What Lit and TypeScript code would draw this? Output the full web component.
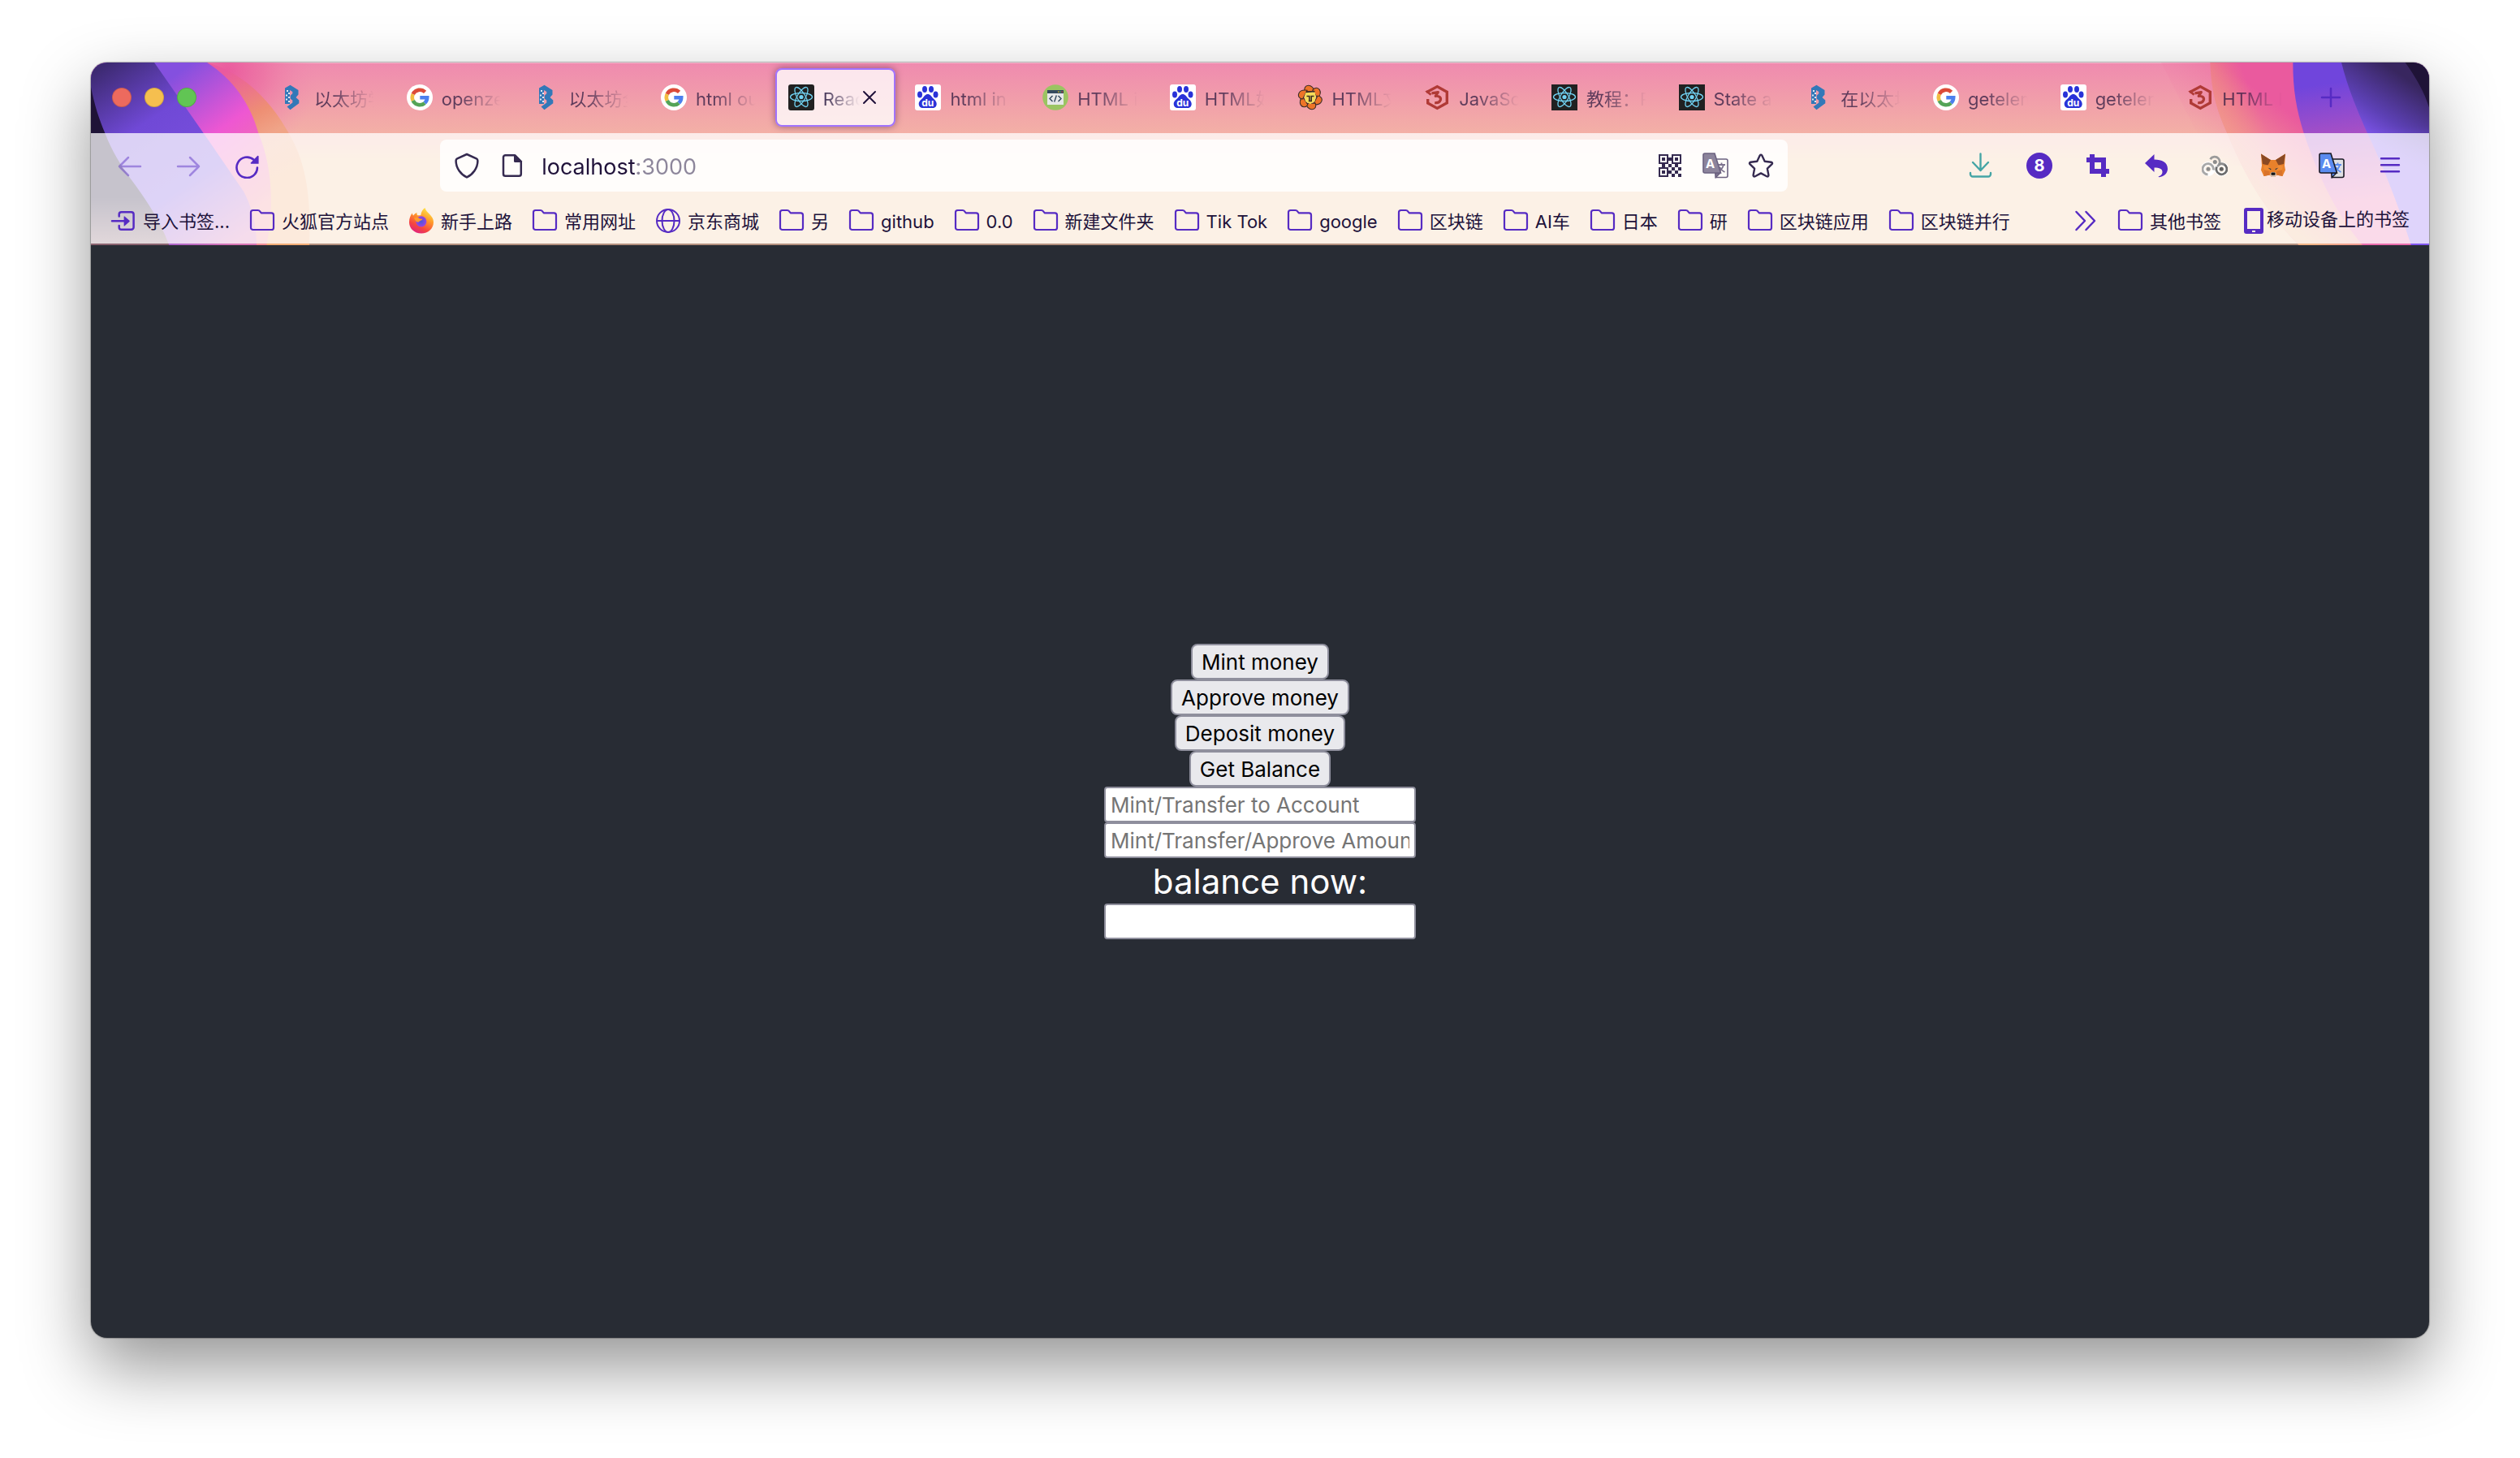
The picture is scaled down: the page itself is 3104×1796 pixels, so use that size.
import { LitElement, html, svg, css, TemplateResult } from "lit";
import { customElement, state } from "lit/decorators.js";
import { classMap } from "lit/directives/class-map.js";

const icon = (body: TemplateResult, cls = "") =>
  html`<svg class="icon ${cls}" viewBox="0 0 32 32" aria-hidden="true">${body}</svg>`;

/* ---------- toolbar icons ---------- */
const line = (d: string, w = 2.5) => svg`<path d=${d} fill="none" stroke="currentColor" stroke-width=${w} stroke-linecap="round" stroke-linejoin="round"/>`;

const backIcon = icon(line("M29 17H3M14 6 3 17l11 11"));
const forwardIcon = icon(line("M3 17h26M18 6l11 11-11 11"));
const reloadIcon = icon(svg`${line("M24.6 8.8A12.7 12.7 0 1 0 28.9 18.6", 2.6)}<path d="M30.6 4.6v9.2H21.4a.8.8 0 0 1-.6-1.3l8-8.2a1 1 0 0 1 1.8.3z" fill="currentColor"/>`);
const shieldIcon = icon(line("M16 2 4.2 7.4Q2.6 8.2 2.6 10C2.6 19 8.5 26.8 16 30.4 23.5 26.8 29.4 19 29.4 10q0-1.8-1.6-2.6z"));
const pageIcon = icon(svg`${line("M7.6 3.2h11.2l8 8v15a2.6 2.6 0 0 1-2.6 2.6H7.6A2.6 2.6 0 0 1 5 26.2V5.8A2.6 2.6 0 0 1 7.6 3.2z")}<path d="M18 2.5h2.2L28 10.6V12h-8.5a1.5 1.5 0 0 1-1.5-1.5z" fill="currentColor"/>`);
const starIcon = icon(line("M16 2.6c.6 0 1 .4 1.3.9l3.4 7.2 7.9 1c1.4.2 1.9 1.5 1 2.5l-5.7 5.5 1.5 7.9c.2 1.500-1 2.200-2.200 1.600L16 25.400l-7.200 3.800c-1.200.6-2.400-.1-2.200-1.600l1.500-7.900-5.700-5.500c-.9-1-.4-2.300 1-2.500l7.900-1 3.400-7.200c.3-.5.7-.9 1.300-.9z", 2.4));
const downloadIcon = icon(line("M15.5 1.5V22M6 12l9.500 10L25 12M3 25v1.500A3 3 0 0 0 6 29.500h19a3 3 0 0 0 3-3V25", 2.4));
const countIcon = icon(svg`<circle cx="16" cy="16" r="16" fill="currentColor"/><text x="16" y="23.3" text-anchor="middle" font-family="Inter, sans-serif" font-size="20" font-weight="700" fill="#fff">8</text>`);
const cropIcon = icon(svg`<path d="M6 2h6v4h14v14h4v6h-4v4h-6v-4H6V12H2V6h4zM12 12v8h8v-8z" fill="currentColor" fill-rule="evenodd"/>`);
const undoIcon = icon(svg`<path d="M2 13 13.500 2v6.500C23 8.500 30 12 30 20c0 5-4 9.500-10.500 10.200-1 .1-1.200-.5-.3-.9 3-1.300 4.300-3.200 4.300-5.500 0-3.800-3.500-5.300-10-5.300V24z" fill="currentColor"/>`);
const menuIcon = icon(line("M5 7.200h22M5 15.200h22M5 23.200h22", 2.4));
const chevronsIcon = icon(line("M5.500 5 16 16 5.500 27M17.500 5 28 16 17.500 27"));
const plusIcon = icon(line("M16 5v22M5 16h22"));
const closeIcon = icon(line("M9 9l14 14M23 9 9 23", 2));
const chainIcon = icon(svg`
  <g fill="none">
    <g stroke="#fff" stroke-width="5"><circle cx="8" cy="20" r="6.400"/><circle cx="24.300" cy="20.300" r="6.400"/></g>
    <path d="M7.500 27A6.700 6.700 0 1 1 14.300 21.500" stroke="#a8a8a8" stroke-width="2.800"/>
    <path d="M10.600 8.200A6.300 6.300 0 1 1 19 17" stroke="#9a9a9a" stroke-width="2.800"/>
    <path d="M18.500 17.500A6.500 6.500 0 1 0 27.500 14.600" stroke="#6c6c6c" stroke-width="2.800"/>
    <path d="M28 15A6.500 6.500 0 0 0 21 14.800" stroke="#8c8c8c" stroke-width="2.800"/>
  </g>
  <g fill="#8c8c8c"><circle cx="8" cy="20.300" r="2.500"/><circle cx="16.300" cy="11.600" r="2.500"/><circle cx="24.300" cy="20.300" r="2.500" fill="#606060"/></g>`);
const foxIcon = icon(svg`<path d="M1 1.500 13 9h6L31 1.500l-1 14.500 1 5.500-3.500 7.500-7.500-1.500-2 2.500h-4l-2-2.500L4.500 29 1 21.500 2 16z" fill="#e8812b"/><path d="M1 1.500 13 9l-3.500 6.500L3 14zM31 1.500 19 9l3.500 6.500L29 14z" fill="#8a4a24"/><path d="M4 16.500l6-1 3 6.500-8-1zM28 16.500l-6-1-3 6.500 8-1z" fill="#f08c35"/><path d="M9.500 18.500l4 1.500-.5 1.600zM22.500 18.500l-4 1.500.5 1.600z" fill="#2b3340"/><path d="M5 21.500 11 23l1 4.500L4.500 29zM27 21.500 21 23l-1 4.500 7.500 1.500z" fill="#d9732a"/><path d="M12 26.500l2-2.500h4l2 2.500-2 3.500h-4z" fill="#d5c4b6"/><path d="M14 24.500h4l.8 2-1 1.200h-3.600l-1-1.200z" fill="#161616"/>`);

const finder = (x: number, y: number) =>
  svg`<path d="M${x} ${y}h12v12h-12zM${x + 2} ${y + 2}v8h8v-8z" fill-rule="evenodd"/><path d="M${x + 4} ${y + 4}h4v4h-4z"/>`;
const qrBits = [[14, 6], [6, 14], [14, 14], [22, 14], [18, 18], [26, 18], [14, 22], [22, 22], [18, 26], [26, 26]];
const qrIcon = icon(svg`<g fill="currentColor">${finder(2, 2)}${finder(18, 2)}${finder(2, 18)}${qrBits.map(([x, y]) => svg`<path d="M${x} ${y}h4v4h-4z"/>`)}</g>`);

const translateIcon = (front: string, edge: string, page: string, ink: string) => icon(svg`
  <path d="M12 8h17a2 2 0 0 1 2 2v18.500a2 2 0 0 1-2 2H17z" fill=${page} stroke=${edge} stroke-width="1.600"/>
  <path d="M19 15h9M23.500 12.500V15M26 15c-1 4-3.500 7-7 9M21 17.500c1.200 2.800 3.400 5 6.500 6.500" fill="none" stroke=${ink} stroke-width="1.800"/>
  <path d="M16 25v6l6-6z" fill=${ink} stroke=${edge} stroke-width="1.400" stroke-linejoin="round"/>
  <path d="M3 1h12l7.500 24H3a2 2 0 0 1-2-2V3a2 2 0 0 1 2-2z" fill=${front} stroke=${edge} stroke-width="1.600"/>
  <text x="9.500" y="18.500" text-anchor="middle" font-family="Inter, sans-serif" font-size="15" font-weight="700" fill="#fff">A</text>`);
const translateGrey = translateIcon("#8c849c", "#6b6180", "#fffdfa", "#7d748f");
const translateBlue = translateIcon("#5a8bf0", "#1a1a24", "#dfe0e4", "#5a8bf0");

/* ---------- bookmark icons ---------- */
const folderIcon = icon(line("M4.600 3h6c1.400 0 2 .5 2.800 1.600l1.400 1.800h12.600A2.600 2.600 0 0 1 30 9v15.400a2.600 2.600 0 0 1-2.600 2.600H4.600A2.600 2.600 0 0 1 2 24.400V5.600A2.600 2.600 0 0 1 4.600 3z", 2.2));
const importIcon = icon(svg`${line("M10.700 10.500V8a2.800 2.800 0 0 1 2.800-2.800h12.300A2.800 2.800 0 0 1 28.600 8v16a2.800 2.800 0 0 1-2.800 2.800H13.500a2.800 2.800 0 0 1-2.800-2.800v-2M2 16.300h16")}<path d="M16.600 11v11q0 1 .9.300l6-5.400q.6-.6 0-1.200l-6-5.100q-.9-.6-.9.400z" fill="currentColor"/>`);
const globeIcon = icon(svg`<g fill="none" stroke="currentColor" stroke-width="2"><circle cx="16" cy="16" r="14"/><ellipse cx="16" cy="16" rx="7.500" ry="14"/><path d="M2 16h28"/></g>`);
const phoneIcon = icon(svg`<path d="M7 0h18a3 3 0 0 1 3 3v26a3 3 0 0 1-3 3H7a3 3 0 0 1-3-3V3a3 3 0 0 1 3-3zM8 4v22h16V4zM14 28v2h4v-2z" fill="currentColor" fill-rule="evenodd"/>`);
const firefoxIcon = icon(svg`
  <defs>
    <linearGradient id="fl" x1=".8" y1="0" x2=".3" y2="1"><stop offset="0" stop-color="#fff04a"/><stop offset=".4" stop-color="#ff9a2a"/><stop offset=".75" stop-color="#f5453f"/><stop offset="1" stop-color="#e02180"/></linearGradient>
    <radialGradient id="fc"><stop offset="0" stop-color="#4a55d8"/><stop offset="1" stop-color="#9a44e0"/></radialGradient>
  </defs>
  <path d="M20.500 0c.5 3 3 5 5.300 7.500C29 11 31 13.500 31 17.500 31 25.500 24.500 31.500 16 31.500S1 25.500 1 17.500c0-4.500 1.500-8 3.800-11 .2 1.500.6 2.300 1.400 3C7.500 7.600 8.800 6.500 10.500 6c-.3 1.500 0 2.500.8 3.200 1.500.2 3 .3 4-.3C15.800 5 17.800 1.500 20.500 0z" fill="url(#fl)"/>
  <circle cx="15.800" cy="16.800" r="6.600" fill="url(#fc)"/>
  <path d="M7 12.500c2.500-1.300 5.500-.8 7 1l3.500.2c-.5 1.800-3.500 1.600-4.500 3.500-2.500 1-4-.2-6-4.700z" fill="#ff9a2a"/>`);

/* ---------- favicons ---------- */
const favB = icon(svg`
  <path d="M13.500.7 23.500 7v5.500L20.500 16l3.800 3.500v3.800l-10.800 8L9.500 27.600l6.800-5.200v-3l-2.600-1.700v-4l2.600-2.400V9L13 7v17H7V4.600z" fill="#3278b8"/>
  <path d="M9 7h2v2H9zM11 10h2v2h-2zM8 12.500h2v2H8zM11 15h2v2h-2zM8 17.500h2v2H8zM11 20h2v2h-2z" fill="#dfe6f0"/>`);
const favGoogle = icon(svg`
  <circle cx="16" cy="16" r="16" fill="#fff"/>
  <g fill="none" stroke-width="4.600">
    <path d="M7.700 12A9.300 9.300 0 0 1 22.600 9.400" stroke="#dc4b38"/>
    <path d="M7.700 20a9.300 9.300 0 0 1 0-8" stroke="#f2bd42"/>
    <path d="M22.200 22.900A9.300 9.300 0 0 1 7.700 20" stroke="#54a457"/>
    <path d="M16.300 16.300h8.900a9.300 9.300 0 0 1-3 6.600" stroke="#4c80ee"/>
  </g>`);
const favReact = (rx: number) => icon(svg`
  <rect width="32" height="32" rx=${rx} fill="#212121"/>
  <g fill="none" stroke="#71d3f3" stroke-width="1.300"><ellipse cx="16" cy="15.500" rx="13.500" ry="5"/><ellipse cx="16" cy="15.500" rx="13.500" ry="5" transform="rotate(60 16 15.500)"/><ellipse cx="16" cy="15.500" rx="13.500" ry="5" transform="rotate(120 16 15.500)"/></g>
  <circle cx="16" cy="15.500" r="2.600" fill="#71d3f3"/>`);
const favBaidu = icon(svg`
  <rect width="32" height="32" rx="3" fill="#fff"/>
  <g fill="#2932d8"><ellipse cx="6" cy="12.500" rx="3" ry="4"/><ellipse cx="12" cy="6" rx="3" ry="4"/><ellipse cx="20" cy="6" rx="3" ry="4"/><ellipse cx="25.500" cy="12.500" rx="3" ry="4"/>
  <path d="M15.800 12c3 0 4.200 2.500 6.200 4.800 2 2.200 4.700 3.700 4.700 7.200 0 3-2 5-5 5H10c-3 0-5.300-2-5.300-5 0-3.500 3-5 4.900-7.200C11.600 14.500 12.800 12 15.800 12z"/></g>
  <text x="15.800" y="27" text-anchor="middle" font-family="Inter, sans-serif" font-size="12" font-weight="700" fill="#fff">du</text>`);
const favCode = icon(svg`
  <circle cx="16" cy="16" r="15.800" fill="#9bc462"/><rect x="6" y="7" width="20" height="18" fill="#e6e7e8"/><path d="M6 7h20v4H6z" fill="#34495e"/>
  <path d="M19 8.500h1.500v1.300H19z" fill="#f0c419"/><path d="M21.300 8.500h1.500v1.300h-1.500z" fill="#4fba6f"/><path d="M23.500 8.500H25v1.300h-1.500z" fill="#e64c3c"/>
  <path d="M12.500 14 9 17.500l3.500 3.500M19.500 14l3.500 3.500-3.500 3.500M17.300 13.500l-2.600 8" fill="none" stroke="#34495e" stroke-width="1.400"/>`);
const favLion = icon(svg`
  <g fill="#ee7428" stroke="#3a2a26" stroke-width="1.100" stroke-linejoin="round">${[0, 60, 120, 180, 240, 300].map(a => svg`<path d="M9.500 9C7.500 4.500 10 1.500 13.500 1.300 17.500 1.200 20 4.500 21.500 8.500z" transform="rotate(${a} 15.800 16)"/>`)}</g>
  <path d="M10.500 9.500h11L23 15l-1.500 6-5.700 3.200L10 21l-1.500-6z" fill="#f6dc5a"/>
  <path d="M10.500 9.500 21.500 8.500M11.500 14.500h3.300v6M20.500 14.500h-3.300v6M13.800 20.500h4.200" fill="none" stroke="#3a2a26" stroke-width="1.600"/>`);
const favHex = icon(svg`
  <path d="M3 9.800 16.300 2.600 28.300 9.300v13.500L16.300 29.400 4.700 22.900V18" fill="none" stroke="#b03a36" stroke-width="3.400"/>
  <path d="M1.300 8.600 3.500 7.600 9.600 11.500 7.700 13.700z" fill="#b03a36"/>
  <path d="M9.500 10.800 17.300 9.600 14.200 14.300C18.800 13.800 21.300 16.300 20.300 19.200 19.400 21.700 16.800 23 13.200 22.600" fill="none" stroke="#b03a36" stroke-width="3.200" stroke-linejoin="round"/>`);

interface Tab { title: string; fav: TemplateResult; }
const TABS: Tab[] = [
  { title: "以太坊学", fav: favB },
  { title: "openze", fav: favGoogle },
  { title: "以太坊全", fav: favB },
  { title: "html ou", fav: favGoogle },
  { title: "Reac", fav: favReact(3) },
  { title: "html in", fav: favBaidu },
  { title: "HTML i", fav: favCode },
  { title: "HTML如", fav: favBaidu },
  { title: "HTML文", fav: favLion },
  { title: "JavaSc", fav: favHex },
  { title: "教程：R", fav: favReact(0) },
  { title: "State a", fav: favReact(0) },
  { title: "在以太坊", fav: favB },
  { title: "getelem", fav: favGoogle },
  { title: "getelem", fav: favBaidu },
  { title: "HTML I", fav: favHex },
];

interface Bookmark { label: string; glyph?: TemplateResult; }
const BOOKMARKS: Bookmark[] = [
  { label: "导入书签...", glyph: importIcon },
  { label: "火狐官方站点" },
  { label: "新手上路", glyph: firefoxIcon },
  { label: "常用网址" },
  { label: "京东商城", glyph: globeIcon },
  { label: "另" },
  { label: "github" },
  { label: "0.0" },
  { label: "新建文件夹" },
  { label: "Tik Tok" },
  { label: "google" },
  { label: "区块链" },
  { label: "AI车" },
  { label: "日本" },
  { label: "研" },
  { label: "区块链应用" },
  { label: "区块链并行" },
];

/* ---------- theme artwork at the two ends of the chrome ---------- */
const artLeft = html`<svg class="art art-left" viewBox="36 39 870 675" aria-hidden="true">
  <defs>
    <radialGradient id="lg" gradientUnits="userSpaceOnUse" cx="540" cy="70" r="340"><stop offset="0" stop-color="#ea5a9e"/><stop offset=".4" stop-color="#ec6ca2" stop-opacity=".7"/><stop offset="1" stop-color="#ef8bb0" stop-opacity="0"/></radialGradient>
    <linearGradient id="l1" gradientUnits="userSpaceOnUse" x1="520" y1="80" x2="720" y2="480"><stop offset="0" stop-color="#ea5a9e"/><stop offset=".42" stop-color="#ee8f74"/><stop offset=".62" stop-color="#f0a488"/><stop offset="1" stop-color="#f1ab74"/></linearGradient>
    <linearGradient id="l2" gradientUnits="userSpaceOnUse" x1="340" y1="90" x2="680" y2="560"><stop offset="0" stop-color="#8450df"/><stop offset=".45" stop-color="#ee57d2"/><stop offset=".95" stop-color="#f08298"/><stop offset="1" stop-color="#f28c94"/></linearGradient>
    <linearGradient id="l3" gradientUnits="userSpaceOnUse" x1="70" y1="60" x2="520" y2="740"><stop offset="0" stop-color="#3d2a72"/><stop offset=".32" stop-color="#7049d6"/><stop offset=".66" stop-color="#7a50de"/><stop offset="1" stop-color="#d874b4"/></linearGradient>
    <linearGradient id="l4" x1="0" y1="0" x2="0" y2="1"><stop offset="0" stop-color="#1f1337"/><stop offset=".7" stop-color="#1f1337"/><stop offset="1" stop-color="#8c6470"/></linearGradient>
  </defs>
  <rect x="36" y="39" width="870" height="675" fill="url(#lg)"/>
  <path d="M465 39C580 70 690 160 767 300 825 400 850 510 843 714H36V39z" fill="url(#l1)"/>
  <path d="M465 39C560 100 625 190 655 300 705 420 715 570 685 714H36V39z" fill="url(#l2)"/>
  <path d="M270 39 452 300 600 515C630 570 648 640 648 714H36V39z" fill="url(#l3)"/>
  <path d="M36 130C50 200 65 245 88 300 115 370 145 415 180 465 240 545 290 620 325 714H36z" fill="url(#l4)"/>
</svg>`;
const artRight = html`<svg class="art art-right" viewBox="306 39 990 675" aria-hidden="true">
  <defs>
    <linearGradient id="r0" gradientUnits="userSpaceOnUse" x1="420" y1="300" x2="760" y2="0"><stop offset="0" stop-color="#ee7fa5" stop-opacity="0"/><stop offset="1" stop-color="#ea5a9e"/></linearGradient>
    <linearGradient id="r1" gradientUnits="userSpaceOnUse" x1="500" y1="260" x2="700" y2="180"><stop offset="0" stop-color="#ef8b80"/><stop offset=".8" stop-color="#ea5a9e"/><stop offset="1" stop-color="#ea5a9e"/></linearGradient>
    <linearGradient id="rf" gradientUnits="userSpaceOnUse" x1="860" y1="280" x2="660" y2="560"><stop offset="0" stop-color="#f0948e" stop-opacity="0"/><stop offset=".5" stop-color="#f29c90" stop-opacity=".7"/><stop offset="1" stop-color="#f0b284"/></linearGradient>
    <linearGradient id="r2" gradientUnits="userSpaceOnUse" x1="900" y1="120" x2="960" y2="560"><stop offset="0" stop-color="#7045dc"/><stop offset=".45" stop-color="#a950c4"/><stop offset="1" stop-color="#ea6cac"/></linearGradient>
    <linearGradient id="r3" gradientUnits="userSpaceOnUse" x1="1080" y1="330" x2="1230" y2="110"><stop offset="0" stop-color="#8056ee"/><stop offset=".4" stop-color="#5c40b4"/><stop offset="1" stop-color="#38265f"/></linearGradient>
    <linearGradient id="r4" x1="0" y1="0" x2="0" y2="1"><stop offset=".35" stop-color="#8056ee" stop-opacity="0"/><stop offset=".7" stop-color="#8056ee"/></linearGradient>
  </defs>
  <path d="M306 39H800V420H500z" fill="url(#r0)"/>
  <path d="M487 39C492 150 510 210 550 300 620 470 700 600 815 714H1296V39z" fill="url(#r1)"/>
  <path d="M487 39C492 150 510 210 550 300 620 470 700 600 815 714H1296V39z" fill="url(#rf)"/>
  <path d="M793 39C793 140 805 210 833 300 890 470 960 610 1050 714H1296V39z" fill="url(#r2)"/>
  <path d="M972 39C995 130 1030 215 1068 300 1140 450 1190 590 1230 714H1296V39z" fill="url(#r3)"/>
  <path d="M972 39C995 130 1030 215 1068 300 1140 450 1190 590 1230 714H1296V39z" fill="url(#r4)"/>
  <path d="M1208 39C1245 90 1280 150 1296 205V39z" fill="#1f1337"/>
</svg>`;

@customElement("app-root")
export class AppRoot extends LitElement {
  @state() private active = 4;

  static styles = css`
    :host {
      display: flex;
      box-sizing: border-box;
      min-height: 100vh;
      padding: 77px 112px 148px;
      background: #fff;
      font-family: Inter, "Noto Sans CJK SC", sans-serif;
      font-size: 22px;
      line-height: 32px;
      color: #20123a;
    }
    * { box-sizing: border-box; }
    button, input, a {
      font: inherit;
      color: inherit;
      text-decoration: none;
    }
    .chrome button {
      border: 0;
      padding: 0;
      margin: 0;
      background: none;
    }
    .icon { display: block; flex: none; width: 32px; height: 32px; }
    .window {
      flex: 1;
      min-width: 0;
      display: flex;
      flex-direction: column;
      border-radius: 20px;
      overflow: hidden;
      background: #282c34;
      box-shadow: 0 0 1px 1px rgba(0, 0, 0, 0.25), 0 36px 84px rgba(0, 0, 0, 0.42);
    }

    .chrome {
      position: relative;
      background: linear-gradient(#ef8aaf 0, #f3b0a6 87px, #f3c79b 122px);
      border-bottom: 2px solid rgba(32, 18, 58, 0.3);
      background-origin: border-box;
      box-shadow: inset 0 1px rgba(255, 255, 255, 0.4);
    }
    .art { position: absolute; top: 0; height: 225px; }
    .art-left { left: 0; width: 290px; }
    .art-right { right: 0; width: 330px; }
    .row { position: relative; display: flex; align-items: center; }

    .tabs { height: 87px; padding-top: 7px; padding-bottom: 8px; padding-right: 81px; }
    .lights { display: flex; gap: 16px; width: 212px; padding-left: 26px; flex: none; }
    .chrome .light { width: 24px; height: 24px; border-radius: 50%; border: 1px solid rgba(0, 0, 0, 0.14); }
    .chrome .light.red { background: #ed6a5e; }
    .chrome .light.amber { background: #f5bf4f; }
    .chrome .light.green { background: #61c554; }
    .strip { flex: 1; min-width: 0; display: flex; height: 72px; }
    .tab {
      flex: 1 1 0;
      min-width: 0;
      display: flex;
      align-items: center;
      margin: 0 4px;
      padding: 0 14px;
      border: 2px solid transparent;
      border-radius: 8px;
    }
    .chrome .tab-btn {
      flex: 1;
      min-width: 0;
      display: flex;
      align-items: center;
      gap: 11px;
      text-align: left;
    }
    .title {
      flex: 1;
      min-width: 0;
      overflow: hidden;
      white-space: nowrap;
      padding-top: 3px;
      opacity: 0.7;
      mask-image: linear-gradient(to right, #000 calc(100% - 52px), transparent);
    }
    .tab.active {
      border-color: #a173ff;
      background: rgba(255, 255, 255, 0.78);
      box-shadow: 0 0 8px rgba(60, 20, 60, 0.5);
    }
    .tab.active .title { opacity: 1; }
    .chrome .close { flex: none; width: 24px; height: 32px; margin-right: 4px; display: flex; justify-content: center; }
    .chrome .new-tab { width: 80px; height: 72px; display: flex; align-items: center; justify-content: center; color: #562bc3; }

    .toolbars { position: relative; background: rgba(255, 255, 255, 0.75); }
    .nav { height: 80px; padding: 0 16px; }
    .group { display: flex; gap: 8px; flex: none; color: #562bc3; }
    .chrome .tool { width: 64px; height: 64px; display: flex; align-items: center; justify-content: center; }
    .chrome .tool:disabled { color: #562bc3; opacity: 0.45; }
    .tool.download { color: #45a5a5; }
    .spacer { flex: 1 1 0; }
    .url {
      flex: 8 1 0;
      min-width: 0;
      height: 64px;
      display: flex;
      align-items: center;
      padding: 0 5px;
      border-radius: 8px;
      background: rgba(255, 255, 255, 0.82);
      color: #352a50;
    }
    .chrome .url-btn { width: 56px; height: 56px; display: flex; align-items: center; justify-content: center; }
    .address {
      flex: 1;
      min-width: 0;
      height: 56px;
      border: 0;
      outline: 0;
      padding: 2px 8px 0;
      font-size: 27px;
      background: linear-gradient(to right, #20123a 126px, #8d869b 126px);
      background-clip: text;
      -webkit-background-clip: text;
      -webkit-text-fill-color: transparent;
    }

    .bookmarks { height: 56px; padding: 0 24px; gap: 24px; }
    .mark { display: flex; align-items: center; gap: 8px; white-space: nowrap; flex: none; }
    .mark .icon { color: #562bc3; }
    .mark span { padding-top: 2px; }
    .mark.firm { gap: 0; }
    .mark.firm span { padding: 0 0 4px; }
    .fill { flex: 1; }

    .page {
      flex: 1;
      display: flex;
      flex-direction: column;
      align-items: center;
      justify-content: center;
      font-size: 26px;
    }
    .action {
      height: 44px;
      padding: 2px 11px 0;
      border: 2px solid #8f8f9d;
      border-radius: 8px;
      background: #e9e9ed;
      color: #000;
      line-height: 38px;
    }
    .field {
      width: 384px;
      height: 44px;
      padding: 1px 6px 0;
      border: 2px solid #8f8f9d;
      border-radius: 4px;
      background: #fff;
      color: #000;
    }
    .field::placeholder { color: #757575; opacity: 1; }
    .balance { font-size: 42px; line-height: 54px; padding-top: 2px; color: #fff; }
  `;

  private tab(t: Tab, i: number) {
    const on = i === this.active;
    return html`<div class=${classMap({ tab: true, active: on })}>
      <button class="tab-btn" @click=${() => (this.active = i)}>${t.fav}<span class="title">${t.title}</span></button>
      ${on ? html`<button class="close" aria-label="关闭">${closeIcon}</button>` : ""}
    </div>`;
  }

  private mark(b: Bookmark) {
    return html`<a class="mark" href="#">${b.glyph ?? folderIcon}<span>${b.label}</span></a>`;
  }

  private tool(glyph: TemplateResult, label: string, cls = "", disabled = false) {
    return html`<button class="tool ${cls}" aria-label=${label} ?disabled=${disabled}>${glyph}</button>`;
  }

  render() {
    return html`<div class="window">
      <header class="chrome">
        ${artLeft}${artRight}
        <div class="row tabs">
          <div class="lights">
            <button class="light red" aria-label="close"></button>
            <button class="light amber" aria-label="minimize"></button>
            <button class="light green" aria-label="zoom"></button>
          </div>
          <div class="strip">${TABS.map((t, i) => this.tab(t, i))}</div>
          <button class="new-tab" aria-label="new tab">${plusIcon}</button>
        </div>
        <div class="toolbars">
          <nav class="row nav">
            <div class="group">
              ${this.tool(backIcon, "back", "", true)}
              ${this.tool(forwardIcon, "forward", "", true)}
              ${this.tool(reloadIcon, "reload")}
            </div>
            <div class="spacer"></div>
            <div class="url">
              <button class="url-btn" aria-label="protection">${shieldIcon}</button>
              <button class="url-btn" aria-label="site information">${pageIcon}</button>
              <input class="address" aria-label="address" .value=${"localhost:3000"} />
              <button class="url-btn" aria-label="QR code">${qrIcon}</button>
              <button class="url-btn" aria-label="translate">${translateGrey}</button>
              <button class="url-btn" aria-label="bookmark">${starIcon}</button>
            </div>
            <div class="spacer"></div>
            <div class="group">
              ${this.tool(downloadIcon, "downloads", "download")}
              ${this.tool(countIcon, "counter")}
              ${this.tool(cropIcon, "crop")}
              ${this.tool(undoIcon, "undo")}
              ${this.tool(chainIcon, "links")}
              ${this.tool(foxIcon, "wallet")}
              ${this.tool(translateBlue, "translate page")}
              ${this.tool(menuIcon, "menu")}
            </div>
          </nav>
          <div class="row bookmarks">
            ${BOOKMARKS.map((b) => this.mark(b))}
            <div class="fill"></div>
            <button class="mark" aria-label="more">${chevronsIcon}</button>
            ${this.mark({ label: "其他书签" })}
            <a class="mark firm" href="#">${phoneIcon}<span>移动设备上的书签</span></a>
          </div>
        </div>
      </header>
      <main class="page">
        <button class="action">Mint money</button>
        <button class="action">Approve money</button>
        <button class="action">Deposit money</button>
        <button class="action">Get Balance</button>
        <input class="field" aria-label="account" placeholder="Mint/Transfer to Account" />
        <input class="field" aria-label="amount" placeholder="Mint/Transfer/Approve Amount" />
        <label class="balance" for="balance">balance now:</label>
        <input class="field" id="balance" />
      </main>
    </div>`;
  }
}
